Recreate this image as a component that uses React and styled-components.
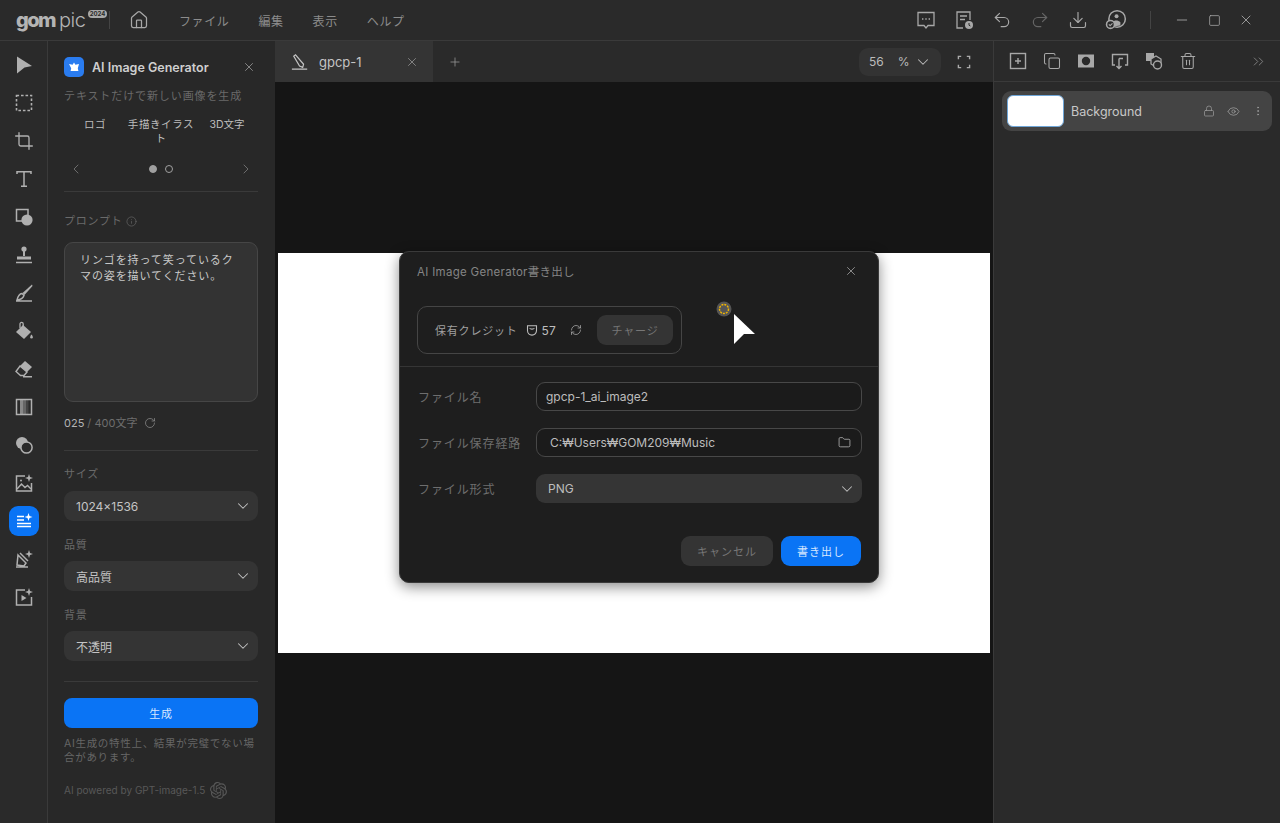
import styled, {createGlobalStyle} from 'styled-components';
import {
  ChevronDown,
  ChevronLeft,
  ChevronRight,
  ChevronsRight,
  Copy,
  Crop,
  Download,
  Ellipsis,
  EllipsisVertical,
  Eye,
  Folder,
  House,
  Info,
  Lock,
  Minus,
  Plus,
  Redo2,
  RefreshCw,
  RotateCw,
  Square,
  Trash2,
  Undo2,
  X,
} from 'lucide-react';
import {SiOpenai} from 'react-icons/si';

const FONT = `Inter, "Noto Sans CJK JP", "Noto Sans", sans-serif`;

const GlobalStyle = createGlobalStyle`
  html, body {
    margin: 0;
    padding: 0;
    background: #151515;
    font-family: ${FONT};
    overflow: hidden;
  }
  * { box-sizing: border-box; }
`;

const Shell = styled.div`
  display: flex;
  flex-direction: column;
  height: 100vh;
  color: #c8c8c8;
`;

const TitleBar = styled.header`
  display: flex;
  align-items: center;
  height: 41px;
  flex: none;
  background: #2a2a2a;
  border-bottom: 1px solid #3a3a3a;
`;

const Logo = styled.div`
  display: flex;
  align-items: baseline;
  width: 109px;
  padding-left: 16px;
  color: #b4b4b4;
  line-height: 20px;
`;

const LogoBold = styled.span`
  font-size: 20px;
  font-weight: 800;
  letter-spacing: -1.6px;
`;

const LogoThin = styled.span`
  margin-left: 4px;
  font-size: 20px;
  font-weight: 300;
  letter-spacing: -0.4px;
`;

const LogoBadge = styled.span`
  align-self: flex-start;
  margin-left: 2px;
  padding: 0 2px;
  font-size: 6px;
  font-weight: 700;
  line-height: 8px;
  color: #2a2a2a;
  background: #a8a8a8;
  border-radius: 4px;
`;

const VLine = styled.div`
  width: 1px;
  height: 18px;
  flex: none;
  background: #444;
`;

const HomeButton = styled.div`
  display: flex;
  margin-left: 19px;
  color: #a8a8a8;
`;

const Menu = styled.nav`
  display: flex;
  gap: 29px;
  margin-left: 30px;
  font-size: 12px;
  letter-spacing: 0.6px;
  color: #8c8c8c;
`;

const TitleActions = styled.div`
  display: flex;
  align-items: center;
  margin-left: auto;
  padding-right: 18px;
  color: #a8a8a8;
`;

const ActionCell = styled.div`
  display: flex;
  justify-content: center;
  width: ${p => p.$w || 38}px;
  color: ${p => (p.$dim ? '#666' : 'inherit')};
`;

const Body = styled.div`
  display: flex;
  flex: 1;
  min-height: 0;
`;

const Rail = styled.aside`
  display: flex;
  flex-direction: column;
  width: 48px;
  flex: none;
  padding-top: 5px;
  background: #2a2a2a;
  border-right: 1px solid #3a3a3a;
`;

const RailItem = styled.div`
  display: flex;
  align-items: center;
  justify-content: center;
  height: 38px;
  color: #b0b0b0;
`;

const RailActive = styled.div`
  display: flex;
  align-items: center;
  justify-content: center;
  width: 30px;
  height: 30px;
  color: #fff;
  background: #0a74f5;
  border-radius: 9px;
`;

const Panel = styled.section`
  display: flex;
  flex-direction: column;
  width: 227px;
  flex: none;
  padding: 16px 17px 0 16px;
  background: #282828;
`;

const PanelHead = styled.div`
  display: flex;
  align-items: center;
  height: 20px;
`;

const BrandIcon = styled.div`
  display: flex;
  align-items: center;
  justify-content: center;
  width: 20px;
  height: 20px;
  background: #2a7cf0;
  border-radius: 5px;
`;

const PanelTitle = styled.div`
  margin-left: 8px;
  font-size: 12.5px;
  font-weight: 600;
  color: #cfcfcf;
`;

const PanelClose = styled.div`
  display: flex;
  margin-left: auto;
  margin-right: 2px;
  color: #999;
`;

const Sub = styled.div`
  margin-top: 10px;
  font-size: 11px;
  line-height: 18px;
  letter-spacing: 0.9px;
  color: #6a6a6a;
  white-space: nowrap;
`;

const Presets = styled.div`
  display: grid;
  grid-template-columns: 62px 70px 62px;
  margin-top: 13px;
  height: 28px;
`;

const Preset = styled.div`
  padding: ${p => (p.$single ? '3px 0 0' : '0')} 0 0;
  font-size: 10.5px;
  line-height: 14px;
  letter-spacing: ${p => (p.$tight ? 0 : 0.6)}px;
  text-align: center;
  color: #bdbdbd;
`;

const Pager = styled.div`
  display: flex;
  align-items: center;
  justify-content: space-between;
  height: 16px;
  margin-top: 15px;
  padding: 0 4px;
  color: #777;
`;

const Dots = styled.div`
  display: flex;
  gap: 8px;
`;

const Dot = styled.span`
  width: 8px;
  height: 8px;
  border-radius: 50%;
  background: ${p => (p.$on ? '#a0a0a0' : 'transparent')};
  border: 1px solid #a0a0a0;
`;

const Divider = styled.div`
  height: 1px;
  flex: none;
  margin-top: ${p => p.$top}px;
  background: #3a3a3a;
`;

const FieldLabel = styled.div`
  display: flex;
  align-items: center;
  gap: 3px;
  margin-top: ${p => p.$top}px;
  font-size: 11px;
  line-height: 18px;
  letter-spacing: 0.8px;
  color: #6a6a6a;
`;

const PromptBox = styled.div`
  height: 160px;
  margin-top: 12px;
  padding: 9px 12px 0 15px;
  font-size: 11px;
  line-height: 16px;
  letter-spacing: 0.9px;
  color: #c8c8c8;
  background: #333;
  border: 1px solid #464646;
  border-radius: 9px;
`;

const Counter = styled.div`
  display: flex;
  align-items: center;
  margin-top: 12px;
  font-size: 11px;
  line-height: 18px;
  color: #6e6e6e;
`;

const CounterNow = styled.span`
  color: #b4b4b4;
  margin-right: 3px;
`;

const CounterIcon = styled.span`
  display: flex;
  margin-left: 7px;
  color: #8a8a8a;
`;

const Select = styled.div`
  display: flex;
  align-items: center;
  justify-content: space-between;
  height: 30px;
  margin-top: ${p => p.$top}px;
  padding: 0 6px 0 12px;
  font-size: 12px;
  color: #c4c4c4;
  background: #343434;
  border-radius: 9px;
`;

const PrimaryButton = styled.div`
  display: flex;
  align-items: center;
  justify-content: center;
  height: 30px;
  margin-top: 16px;
  font-size: 11px;
  letter-spacing: 0.8px;
  color: #d8e8ff;
  background: #0a74f5;
  border-radius: 8px;
`;

const Note = styled.div`
  margin-top: 9px;
  font-size: 10.5px;
  line-height: 14px;
  letter-spacing: 0.7px;
  color: #666;
`;

const Powered = styled.div`
  display: flex;
  align-items: center;
  gap: 5px;
  margin-top: 16px;
  font-size: 10px;
  line-height: 18px;
  white-space: nowrap;
  color: #585858;
`;

const Workspace = styled.main`
  position: relative;
  display: flex;
  flex-direction: column;
  flex: 1;
  min-width: 0;
`;

const TabBar = styled.div`
  display: flex;
  align-items: center;
  height: 41px;
  flex: none;
  background: #2a2a2a;
`;

const Tab = styled.div`
  display: flex;
  align-items: center;
  width: 158px;
  height: 100%;
  padding: 0 14px 0 16px;
  font-size: 13px;
  color: #c4c4c4;
  background: #343434;
`;

const TabName = styled.span`
  margin-left: 10px;
`;

const TabClose = styled.span`
  display: flex;
  margin-left: auto;
  color: #999;
`;

const TabAdd = styled.div`
  display: flex;
  margin-left: 15px;
  color: #999;
`;

const Zoom = styled.div`
  display: flex;
  align-items: center;
  width: 82px;
  height: 28px;
  margin-left: auto;
  padding: 0 9px 0 10px;
  font-size: 12px;
  color: #bbb;
  background: #333;
  border-radius: 9px;
`;

const ZoomPercent = styled.span`
  margin-left: 14px;
  margin-right: auto;
`;

const FitButton = styled.div`
  display: flex;
  margin: 0 22px 0 16px;
  color: #aaa;
`;

const Canvas = styled.div`
  display: flex;
  align-items: center;
  justify-content: center;
  flex: 1;
  background: #151515;
`;

const Artboard = styled.div`
  width: 712px;
  height: 400px;
  background: #fff;
`;

const Dialog = styled.div`
  position: absolute;
  left: 124px;
  top: 210px;
  width: 480px;
  height: 332px;
  background: #1e1e1e;
  border: 1px solid #3a3a3a;
  border-radius: 10px;
  box-shadow: 0 4px 14px rgba(0, 0, 0, 0.45);
`;

const DialogHead = styled.div`
  display: flex;
  align-items: center;
  justify-content: space-between;
  height: 38px;
  padding: 0 20px 0 17px;
  font-size: 11.5px;
  letter-spacing: 0.3px;
  color: #858585;
`;

const CreditBox = styled.div`
  display: flex;
  align-items: center;
  width: 265px;
  height: 48px;
  margin: 16px 0 0 17px;
  padding: 0 8px 0 17px;
  font-size: 11px;
  color: #a0a0a0;
  border: 1px solid #454545;
  border-radius: 10px;
`;

const CreditLabel = styled.span`
  letter-spacing: 0.8px;
`;

const CreditCount = styled.span`
  display: flex;
  align-items: center;
  gap: 4px;
  margin-left: 8px;
  font-size: 12px;
  color: #bdbdbd;
`;

const CreditRefresh = styled.span`
  display: flex;
  margin-left: 14px;
  color: #aaa;
`;

const ChargeButton = styled.div`
  display: flex;
  align-items: center;
  justify-content: center;
  width: 76px;
  height: 30px;
  margin-left: auto;
  letter-spacing: 0.8px;
  color: #777;
  background: #343434;
  border-radius: 9px;
`;

const DialogForm = styled.div`
  display: flex;
  flex-direction: column;
  gap: 17px;
  margin-top: 12px;
  padding: 15px 17px 0 18px;
  border-top: 1px solid #353535;
`;

const FormRow = styled.div`
  display: grid;
  grid-template-columns: 118px 326px;
  align-items: center;
  height: 29px;
`;

const FormLabel = styled.label`
  font-size: 12px;
  letter-spacing: 0.9px;
  color: #6e6e6e;
  white-space: nowrap;
`;

const TextField = styled.div`
  display: flex;
  align-items: center;
  justify-content: space-between;
  height: 29px;
  padding: 0 10px 0 ${p => p.$pad || 9}px;
  font-size: 12px;
  color: #bdbdbd;
  border: 1px solid #484848;
  border-radius: 9px;
  background: #1b1b1b;
`;

const FormatSelect = styled(TextField)`
  padding: 0 6px 0 12px;
  border: none;
  background: #353535;
`;

const DialogFoot = styled.div`
  display: flex;
  justify-content: flex-end;
  gap: 8px;
  margin-top: 33px;
  padding-right: 17px;
`;

const FootButton = styled.div`
  display: flex;
  align-items: center;
  justify-content: center;
  width: ${p => p.$w}px;
  height: 30px;
  font-size: 11px;
  letter-spacing: 1px;
  color: ${p => (p.$primary ? '#d8e8ff' : '#777')};
  background: ${p => (p.$primary ? '#0a74f5' : '#343434')};
  border-radius: 9px;
`;

const Pointer = styled.div`
  position: absolute;
  left: 440px;
  top: 259px;
  display: flex;
  pointer-events: none;
`;

const Layers = styled.aside`
  display: flex;
  flex-direction: column;
  width: 287px;
  flex: none;
  background: #2a2a2a;
  border-left: 1px solid #3a3a3a;
`;

const LayerTools = styled.div`
  display: flex;
  align-items: center;
  height: 41px;
  flex: none;
  padding: 0 13px 0 7px;
  color: #a8a8a8;
  border-bottom: 1px solid #3a3a3a;
`;

const LayerTool = styled.div`
  display: flex;
  justify-content: center;
  width: 34px;
`;

const Collapse = styled.div`
  display: flex;
  margin-left: auto;
  color: #8a8a8a;
`;

const LayerRow = styled.div`
  display: flex;
  align-items: center;
  height: 40px;
  margin: 9px 8px 0;
  padding: 0 8px 0 5px;
  background: #444;
  border-radius: 9px;
`;

const Thumb = styled.div`
  width: 57px;
  height: 32px;
  background: #fff;
  border: 1px solid #6fa6d8;
  border-radius: 6px;
`;

const LayerName = styled.span`
  margin-left: 7px;
  font-size: 12.5px;
  color: #c8c8c8;
`;

const LayerIcons = styled.div`
  display: flex;
  align-items: center;
  gap: 12px;
  margin-left: auto;
  color: #999;
`;

const Svg = ({size = 20, children, ...rest}) => (
  <svg
    width={size}
    height={size}
    viewBox="0 0 20 20"
    fill="none"
    stroke="currentColor"
    strokeWidth="1.4"
    {...rest}
  >
    {children}
  </svg>
);

const Sparkle = ({x, y}) => (
  <path
    d={`M${x} ${y - 4}l1 3 3 1-3 1-1 3-1-3-3-1 3-1z`}
    fill="currentColor"
    stroke="none"
  />
);

const railIcons = [
  <Svg key="select">
    <path d="M3 1.5l15 9.5-7.5 1.5L3 18.5z" fill="currentColor" stroke="none" />
  </Svg>,
  <Svg key="marquee">
    <rect x="2.5" y="2.5" width="15" height="15" strokeWidth="1.6" strokeDasharray="2.6 1.9" />
  </Svg>,
  <Crop key="crop" size={20} strokeWidth={1.6} />,
  <Svg key="text">
    <path d="M3 5V2.8h14V5M10 2.8v14.4M7 17.2h6" strokeWidth="1.5" />
  </Svg>,
  <Svg key="shapes">
    <path d="M9 14H2.5V2.5H14V8" strokeWidth="1.5" />
    <circle cx="13" cy="13" r="5.6" fill="currentColor" stroke="none" />
  </Svg>,
  <Svg key="stamp">
    <circle cx="10" cy="4" r="2.6" fill="currentColor" stroke="none" />
    <path d="M9 6h2v5H9zM3 11.5h14v3H3z" fill="currentColor" stroke="none" />
    <path d="M2 17.5h16" strokeWidth="1.5" />
  </Svg>,
  <Svg key="brush">
    <path d="M18 1.5L8.5 10l2 2L18.5 3z" fill="currentColor" stroke="none" />
    <path d="M8 10.5c-2.5.3-4 2.5-5 6.5 3-.3 6-1.5 7-4.5zM2 18h16" strokeWidth="1.4" />
  </Svg>,
  <Svg key="bucket">
    <path d="M9 4l8 7-7 7-8-7z" fill="currentColor" stroke="none" />
    <path d="M6 7V3a1.6 1.6 0 013.2 0v4" strokeWidth="1.3" />
    <path d="M17.5 13.5c1 1.3 1.3 2 1.3 2.7a1.3 1.3 0 01-2.6 0c0-.7.3-1.4 1.3-2.7z" fill="currentColor" stroke="none" />
  </Svg>,
  <Svg key="eraser">
    <path d="M11 2l7 6-5 5-7-6z" fill="currentColor" stroke="none" />
    <path d="M6 7l7 6-3 3.5H6.5L2 12.5zM9 17.8h9" strokeWidth="1.4" />
  </Svg>,
  <Svg key="gradient">
    <rect x="2.5" y="2.5" width="15" height="15" strokeWidth="1.5" />
    <rect x="6" y="3" width="3" height="14" fill="currentColor" stroke="none" opacity="0.7" />
    <rect x="9" y="3" width="3" height="14" fill="currentColor" stroke="none" opacity="0.45" />
    <rect x="12" y="3" width="2.5" height="14" fill="currentColor" stroke="none" opacity="0.2" />
  </Svg>,
  <Svg key="blend">
    <circle cx="8" cy="8" r="6" fill="currentColor" stroke="none" />
    <circle cx="12.5" cy="12.5" r="5.6" fill="#2a2a2a" strokeWidth="1.5" />
  </Svg>,
  <Svg key="image-ai">
    <path d="M11 3H2.5v15h15v-8" strokeWidth="1.5" />
    <path d="M3 16l4.5-5 3.5 3.5 2.5-2 3.5 3.5" strokeWidth="1.4" />
    <circle cx="7" cy="7.5" r="1" fill="currentColor" stroke="none" />
    <Sparkle x={15} y={5} />
  </Svg>,
  null,
  <Svg key="pen-ai">
    <path d="M4 6l8 8-2 3-7-1zM2 18h12" strokeWidth="1.5" />
    <path d="M6 4l8 8" strokeWidth="1.5" />
    <Sparkle x={15} y={5} />
  </Svg>,
  <Svg key="video-ai">
    <path d="M11 3H2.5v15h15v-8" strokeWidth="1.5" />
    <path d="M7.5 8v6l5-3z" fill="currentColor" stroke="none" />
    <Sparkle x={15} y={5} />
  </Svg>,
];

const TextAiIcon = () => (
  <Svg>
    <path d="M3 5.5h7M3 9h7M3 12.5h14M3 15.5h14" strokeWidth="1.5" />
    <Sparkle x={14.5} y={6} />
  </Svg>
);

const App = () => (
  <Shell>
    <GlobalStyle />
    <TitleBar>
      <Logo>
        <LogoBold>gom</LogoBold>
        <LogoThin>pic</LogoThin>
        <LogoBadge>2024</LogoBadge>
      </Logo>
      <VLine />
      <HomeButton>
        <House size={20} strokeWidth={1.5} />
      </HomeButton>
      <Menu>
        <span>ファイル</span>
        <span>編集</span>
        <span>表示</span>
        <span>ヘルプ</span>
      </Menu>
      <TitleActions>
        <ActionCell>
          <Svg>
            <path d="M2 2.5h16v13h-6l-2 2.5-2-2.5H2z" strokeWidth="1.3" />
            <path d="M6 9h1.4M9.3 9h1.4M12.6 9H14" strokeWidth="1.5" />
          </Svg>
        </ActionCell>
        <ActionCell>
          <Svg>
            <path d="M9 18H3V2h13v8M6 6h7M6 9.5h5" strokeWidth="1.3" />
            <circle cx="15" cy="15" r="4" fill="currentColor" stroke="none" />
            <path d="M15 13v2.2l1.4.8" stroke="#2a2a2a" strokeWidth="1" />
          </Svg>
        </ActionCell>
        <ActionCell>
          <Undo2 size={20} strokeWidth={1.4} />
        </ActionCell>
        <ActionCell $dim>
          <Redo2 size={20} strokeWidth={1.4} />
        </ActionCell>
        <ActionCell>
          <Download size={20} strokeWidth={1.4} />
        </ActionCell>
        <ActionCell>
          <Svg size={22}>
            <circle cx="11" cy="9" r="7.5" strokeWidth="1.4" />
            <circle cx="10.5" cy="6.5" r="1.8" fill="currentColor" stroke="none" />
            <path d="M7 12c1-2 5-2 7 0v3l-7 1z" fill="currentColor" stroke="none" />
            <circle cx="5" cy="14" r="3.6" fill="#2a2a2a" />
            <path d="M3.5 14l1.2 1.2L6.8 13" strokeWidth="1" />
          </Svg>
        </ActionCell>
        <ActionCell $w={31}>
          <VLine />
        </ActionCell>
        <ActionCell $w={32}>
          <Minus size={16} strokeWidth={1.3} />
        </ActionCell>
        <ActionCell $w={32}>
          <Square size={13} strokeWidth={1.4} />
        </ActionCell>
        <ActionCell $w={32}>
          <X size={16} strokeWidth={1.3} />
        </ActionCell>
      </TitleActions>
    </TitleBar>

    <Body>
      <Rail>
        {railIcons.map((icon, i) =>
          icon ? (
            <RailItem key={i}>{icon}</RailItem>
          ) : (
            <RailItem key={i}>
              <RailActive>
                <TextAiIcon />
              </RailActive>
            </RailItem>
          ),
        )}
      </Rail>

      <Panel>
        <PanelHead>
          <BrandIcon>
            <svg width="12" height="12" viewBox="0 0 12 12">
              <path d="M6 1.5l1.4 2.2 3.6-.7-1.2 4.3 .6 2.7H2.6l.6-2.7L1 3l3.6.7z" fill="#fff" />
            </svg>
          </BrandIcon>
          <PanelTitle>AI Image Generator</PanelTitle>
          <PanelClose>
            <X size={14} strokeWidth={1.4} />
          </PanelClose>
        </PanelHead>
        <Sub>テキストだけで新しい画像を生成</Sub>
        <Presets>
          <Preset $single>ロゴ</Preset>
          <Preset>手描きイラスト</Preset>
          <Preset $single $tight>
            3D文字
          </Preset>
        </Presets>
        <Pager>
          <ChevronLeft size={16} strokeWidth={1.3} />
          <Dots>
            <Dot $on />
            <Dot />
          </Dots>
          <ChevronRight size={16} strokeWidth={1.3} />
        </Pager>
        <Divider $top={14} />
        <FieldLabel $top={20}>
          プロンプト
          <Info size={11} strokeWidth={1.4} />
        </FieldLabel>
        <PromptBox>リンゴを持って笑っているクマの姿を描いてください。</PromptBox>
        <Counter>
          <CounterNow>025</CounterNow> / 400文字
          <CounterIcon>
            <RotateCw size={12} strokeWidth={1.5} />
          </CounterIcon>
        </Counter>
        <Divider $top={18} />
        <FieldLabel $top={14}>サイズ</FieldLabel>
        <Select $top={8}>
          1024x1536
          <ChevronDown size={18} strokeWidth={1.4} />
        </Select>
        <FieldLabel $top={15}>品質</FieldLabel>
        <Select $top={7}>
          高品質
          <ChevronDown size={18} strokeWidth={1.4} />
        </Select>
        <FieldLabel $top={15}>背景</FieldLabel>
        <Select $top={7}>
          不透明
          <ChevronDown size={18} strokeWidth={1.4} />
        </Select>
        <Divider $top={20} />
        <PrimaryButton>生成</PrimaryButton>
        <Note>AI生成の特性上、結果が完璧でない場合があります。</Note>
        <Powered>
          AI powered by GPT-image-1.5
          <SiOpenai size={17} />
        </Powered>
      </Panel>

      <Workspace>
        <TabBar>
          <Tab>
            <Svg size={18}>
              <path d="M3 3.5l2-1.5 9 10.5-1 3.5-3.5-1.5zM1 18h17" strokeWidth="1.3" />
            </Svg>
            <TabName>gpcp-1</TabName>
            <TabClose>
              <X size={14} strokeWidth={1.3} />
            </TabClose>
          </Tab>
          <TabAdd>
            <Plus size={14} strokeWidth={1.3} />
          </TabAdd>
          <Zoom>
            56
            <ZoomPercent>%</ZoomPercent>
            <ChevronDown size={18} strokeWidth={1.4} />
          </Zoom>
          <FitButton>
            <Svg size={14}>
              <path d="M2 6V2h4M14 2h4v4M18 14v4h-4M6 18H2v-4" strokeWidth="2" />
            </Svg>
          </FitButton>
        </TabBar>
        <Canvas>
          <Artboard />
        </Canvas>

        <Dialog>
          <DialogHead>
            AI Image Generator書き出し
            <X size={14} strokeWidth={1.4} color="#a0a0a0" />
          </DialogHead>
          <CreditBox>
            <CreditLabel>保有クレジット</CreditLabel>
            <CreditCount>
              <Svg size={12}>
                <path d="M2.5 3h15v8a7.5 7.5 0 01-15 0zM6 7c1.5 2 6.5 2 8 0" strokeWidth="1.8" />
              </Svg>
              57
            </CreditCount>
            <CreditRefresh>
              <RefreshCw size={12} strokeWidth={1.5} />
            </CreditRefresh>
            <ChargeButton>チャージ</ChargeButton>
          </CreditBox>
          <DialogForm>
            <FormRow>
              <FormLabel>ファイル名</FormLabel>
              <TextField>gpcp-1_ai_image2</TextField>
            </FormRow>
            <FormRow>
              <FormLabel>ファイル保存経路</FormLabel>
              <TextField $pad={13}>
                C:₩Users₩GOM209₩Music
                <Folder size={13} strokeWidth={1.4} />
              </TextField>
            </FormRow>
            <FormRow>
              <FormLabel>ファイル形式</FormLabel>
              <FormatSelect>
                PNG
                <ChevronDown size={18} strokeWidth={1.4} />
              </FormatSelect>
            </FormRow>
          </DialogForm>
          <DialogFoot>
            <FootButton $w={92}>キャンセル</FootButton>
            <FootButton $w={80} $primary>
              書き出し
            </FootButton>
          </DialogFoot>
        </Dialog>

        <Pointer>
          <svg width="46" height="50" viewBox="0 0 46 50">
            <circle cx="9" cy="9" r="7.5" fill="#555" />
            <circle cx="9" cy="9" r="4.5" fill="none" stroke="#f5b800" strokeWidth="1.4" strokeDasharray="2 1" />
            <path d="M19 14l21 20-11 0-10 10z" fill="#fff" />
          </svg>
        </Pointer>
      </Workspace>

      <Layers>
        <LayerTools>
          <LayerTool>
            <Svg>
              <rect x="2.5" y="2.5" width="15" height="15" strokeWidth="1.4" />
              <path d="M10 7v6M7 10h6" strokeWidth="1.4" />
            </Svg>
          </LayerTool>
          <LayerTool>
            <Copy size={18} strokeWidth={1.4} />
          </LayerTool>
          <LayerTool>
            <Svg>
              <path fillRule="evenodd" clipRule="evenodd" d="M2 3.5h16v13H2zM10 5.8a4.2 4.2 0 100 8.4 4.2 4.2 0 000-8.4z" fill="currentColor" stroke="none" />
            </Svg>
          </LayerTool>
          <LayerTool>
            <Svg>
              <path d="M5 14H2.5V3.5h15V14H15M9 7.5v10M6.5 15l2.5 2.5 2.5-2.5M9 7.5h4" strokeWidth="1.4" />
            </Svg>
          </LayerTool>
          <LayerTool>
            <Svg>
              <rect x="2" y="2" width="8" height="8" fill="currentColor" stroke="none" />
              <path d="M7 8l5-3 5 3v5l-5 3-5-3z" fill="#2a2a2a" strokeWidth="1.3" />
              <circle cx="13.5" cy="14" r="4" fill="#2a2a2a" strokeWidth="1.4" />
            </Svg>
          </LayerTool>
          <LayerTool>
            <Trash2 size={18} strokeWidth={1.4} />
          </LayerTool>
          <Collapse>
            <ChevronsRight size={17} strokeWidth={1.2} />
          </Collapse>
        </LayerTools>
        <LayerRow>
          <Thumb />
          <LayerName>Background</LayerName>
          <LayerIcons>
            <Lock size={12} strokeWidth={1.5} />
            <Eye size={13} strokeWidth={1.5} />
            <EllipsisVertical size={12} strokeWidth={1.8} />
          </LayerIcons>
        </LayerRow>
      </Layers>
    </Body>
  </Shell>
);

export default App;
